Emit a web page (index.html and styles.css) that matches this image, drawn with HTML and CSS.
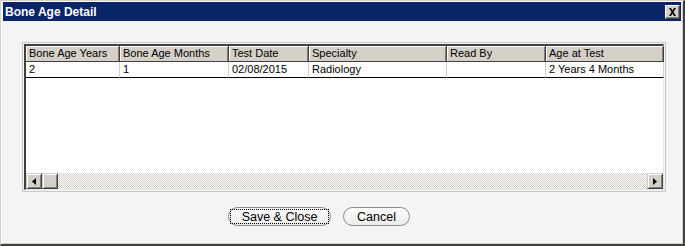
FILE: index.html
```html
<!DOCTYPE html>
<html lang="en">
<head>
    <meta charset="UTF-8">
    <title>Bone Age Detail</title>
    <link rel="stylesheet" href="styles.css">
</head>
<body>
    <div class="window">
        <div class="titlebar">
            <span class="title">Bone Age Detail</span>
            <span class="close">
                <svg width="9" height="8" viewBox="0 0 9 8"><path d="M1 0h2l1.5 2.5L6 0h2L5.5 4 8 8H6L4.5 5.5 3 8H1l2.5-4z" fill="#000"/></svg>
            </span>
        </div>
        <div class="frame">
            <div class="grid">
                <div class="rows">
                    <div class="row head">
                        <div class="cell">Bone Age Years</div>
                        <div class="cell">Bone Age Months</div>
                        <div class="cell">Test Date</div>
                        <div class="cell">Specialty</div>
                        <div class="cell">Read By</div>
                        <div class="cell">Age at Test</div>
                    </div>
                    <div class="row data">
                        <div class="cell">2</div>
                        <div class="cell">1</div>
                        <div class="cell">02/08/2015</div>
                        <div class="cell">Radiology</div>
                        <div class="cell"></div>
                        <div class="cell">2 Years 4 Months</div>
                    </div>
                </div>
                <div class="hscroll">
                    <span class="sbtn"><svg width="4" height="7" viewBox="0 0 4 7"><path d="M4 0v7L0 3.5z" fill="#000"/></svg></span>
                    <span class="sbtn thumb"></span>
                    <span class="track"></span>
                    <span class="sbtn"><svg width="4" height="7" viewBox="0 0 4 7"><path d="M0 0v7l4-3.5z" fill="#000"/></svg></span>
                </div>
            </div>
        </div>
        <div class="actions">
            <button class="btn focused"><span>Save &amp; Close</span></button>
            <button class="btn"><span>Cancel</span></button>
        </div>
    </div>
</body>
</html>
```

FILE: styles.css
```css
*{
    margin: 0;
    padding: 0;
    box-sizing: border-box;
}
body{
    width: 685px;
    height: 246px;
    font-family: "Liberation Sans", Arial, sans-serif;
}
.window{
    width: 685px;
    height: 246px;
    border-style: solid;
    border-width: 1px 2px 2px 1px;
    border-color: #d4d0c8 #404040 #404040 #d4d0c8;
    box-shadow: inset 1px 1px #ffffff, inset -1px -1px #d4d0c8;
    background: #f4f4f4;
    padding: 1px 2px 0 2px;
}
.titlebar{
    height: 19px;
    background: #0a2468;
    display: flex;
    align-items: center;
    justify-content: space-between;
    padding: 0 1px 0 2px;
}
.title{
    color: #ffffff;
    font-weight: bold;
    font-size: 12px;
}
.close{
    width: 15px;
    height: 14px;
    background: #d4d0c8;
    border: 1px solid;
    border-color: #ffffff #404040 #404040 #ffffff;
    box-shadow: inset -1px -1px #808080;
    display: flex;
    align-items: center;
    justify-content: center;
    margin-top: 1px;
}
.frame{
    margin: 21px 0 0 19px;
    width: 644px;
    height: 150px;
    border: 1px solid #c8c8c8;
    padding: 1px;
}
.grid{
    height: 100%;
    border-style: solid;
    border-width: 2px 1px 1px 2px;
    border-color: #404040 #e8e8e8 #e8e8e8 #404040;
    background: #ffffff;
    display: flex;
    flex-direction: column;
}
.rows{
    flex: 1;
}
.row{
    display: grid;
    grid-template-columns: 94px 109px 80px 138px 99px 118px;
    font-size: 11px;
    color: #000;
}
.row .cell{
    padding-left: 3px;
    white-space: nowrap;
    overflow: hidden;
}
.head .cell{
    height: 16px;
    line-height: 15px;
    background: #d4d0c8;
    border-right: 1px solid #404040;
    border-bottom: 1px solid #404040;
    box-shadow: inset 1px 1px #ffffff, inset -1px 0 #808080;
}
.data .cell{
    height: 16px;
    line-height: 15px;
    border-right: 1px solid #d4d0c8;
    border-bottom: 1px solid #000000;
}
.hscroll{
    height: 16px;
    display: flex;
}
.sbtn{
    width: 16px;
    height: 16px;
    background: #d4d0c8;
    border: 1px solid;
    border-color: #d4d0c8 #404040 #404040 #d4d0c8;
    box-shadow: inset 1px 1px #ffffff, inset -1px -1px #808080;
    display: flex;
    align-items: center;
    justify-content: center;
}
.track{
    flex: 1;
    background: repeating-conic-gradient(#d4d0c8 0 25%, #ffffff 0 50%) 0 0 / 2px 2px;
}
.actions{
    display: flex;
    gap: 12px;
    margin: 15px 0 0 225px;
}
.btn{
    height: 19px;
    border: 1px solid #8a8a8a;
    border-radius: 10px;
    background: linear-gradient(#fdfdfd, #ececec);
    font-family: "Liberation Sans", Arial, sans-serif;
    font-size: 12.5px;
    color: #000;
    padding: 1px;
    display: flex;
}
.btn span{
    flex: 1;
    display: flex;
    align-items: center;
    justify-content: center;
    border: 1px solid transparent;
}
.btn.focused{
    width: 103px;
}
.btn.focused span{
    border: 1px dotted #000;
}
.btn:not(.focused){
    width: 67px;
}
```
